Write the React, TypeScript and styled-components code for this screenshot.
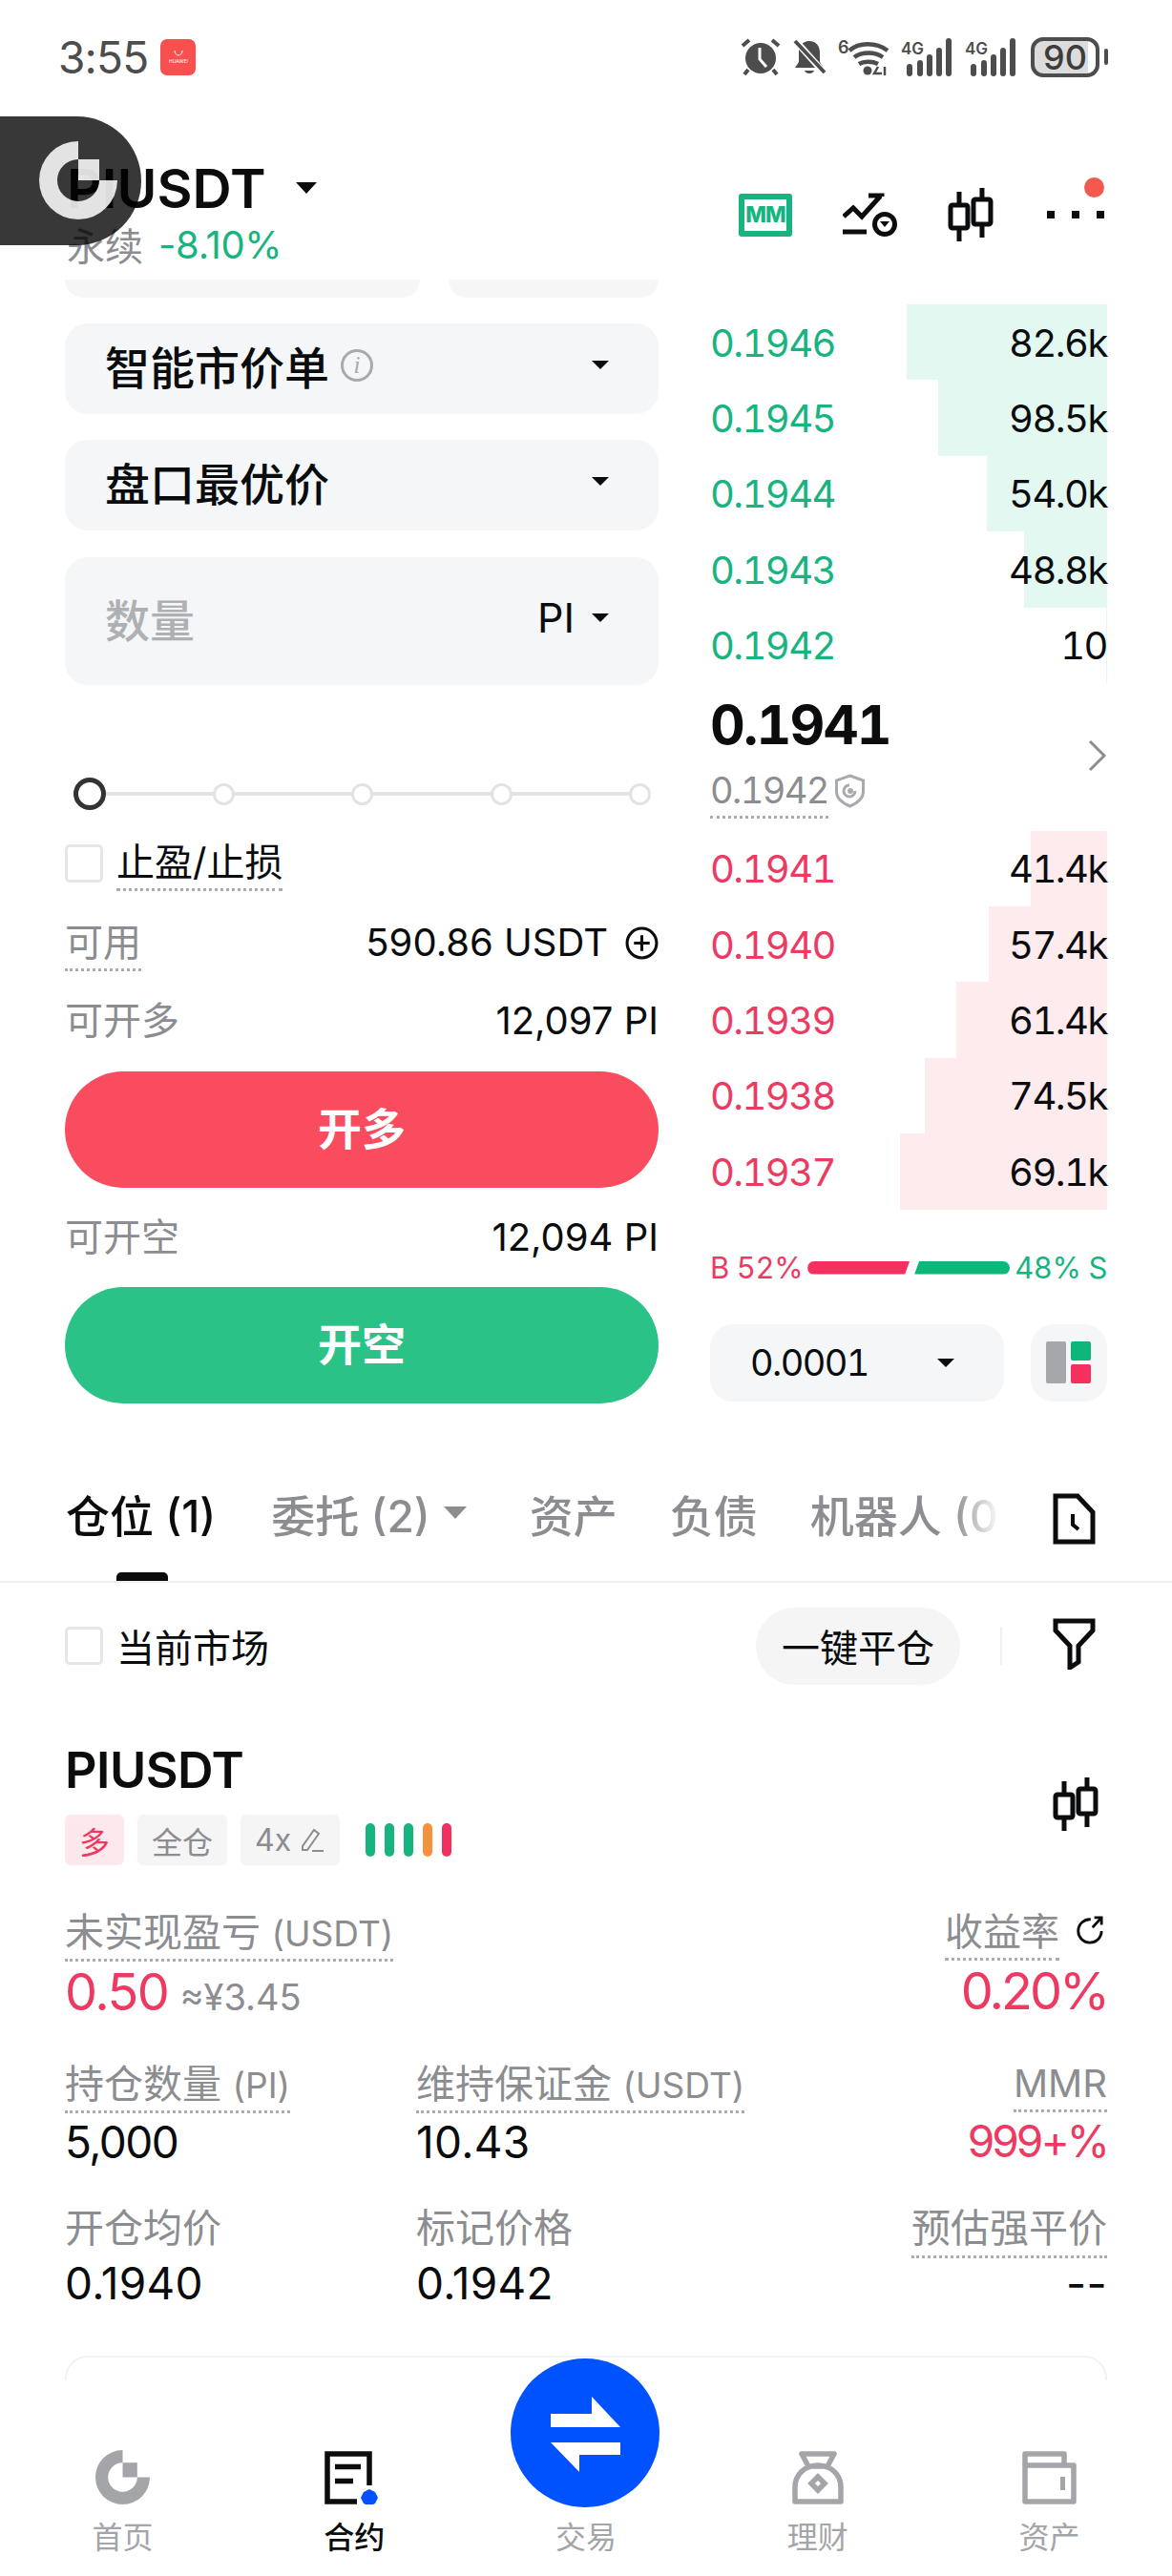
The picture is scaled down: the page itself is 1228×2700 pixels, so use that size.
import styled, { createGlobalStyle } from "styled-components";

const colors = {
  ink: "#0a0c0e",
  gray: "#8b8d90",
  muted: "#a3a5a8",
  field: "#f4f6f7",
  green: "#17b47f",
  red: "#ec3a62",
  greenBar: "#e3f8f1",
  redBar: "#fdebee",
  status: "#4d4d4d",
};

const GlobalStyle = createGlobalStyle`
  html, body { margin: 0; padding: 0; background: #fff; }
  body { font-family: Inter, "Noto Sans CJK SC", sans-serif; color: ${colors.ink}; }
  * { box-sizing: border-box; }
`;

const asks = [
  { price: "0.1946", size: "82.6k", depth: 210 },
  { price: "0.1945", size: "98.5k", depth: 177 },
  { price: "0.1944", size: "54.0k", depth: 126 },
  { price: "0.1943", size: "48.8k", depth: 87 },
  { price: "0.1942", size: "10", depth: 1 },
];

const bids = [
  { price: "0.1941", size: "41.4k", depth: 80 },
  { price: "0.1940", size: "57.4k", depth: 124 },
  { price: "0.1939", size: "61.4k", depth: 158 },
  { price: "0.1938", size: "74.5k", depth: 191 },
  { price: "0.1937", size: "69.1k", depth: 217 },
];

const sliderStops = [0, 1, 2, 3, 4];
const riskBars = ["#17b47f", "#17b47f", "#17b47f", "#f5923e", "#f0305e"];

const Page = styled.div`
  position: relative;
  width: 1228px;
  height: 2700px;
  overflow: hidden;
  background: #fff;
`;

/* status bar */
const StatusBar = styled.div`
  height: 120px;
  padding: 0 68px 0 61px;
  display: flex;
  align-items: center;
  justify-content: space-between;
  color: ${colors.status};
`;

const StatusLeft = styled.div`
  display: flex;
  align-items: center;
  gap: 13px;
`;

const Clock = styled.span`
  font-size: 46px;
  line-height: 56px;
  letter-spacing: -0.8px;
`;

const AppBadge = styled.div`
  width: 37px;
  height: 38px;
  border-radius: 7px;
  background: #f8504f;
  color: #fff;
  font-size: 5px;
  display: flex;
  flex-direction: column;
  align-items: center;
  justify-content: center;
  gap: 2px;
`;

const StatusIcons = styled.div`
  display: flex;
  align-items: center;
  gap: 12px;
`;

const Battery = styled.div`
  position: relative;
  width: 72px;
  height: 42px;
  margin-left: 2px;
  margin-right: 8px;
  border: 4px solid ${colors.status};
  border-radius: 13px;
  background: linear-gradient(90deg, #dcdcdc 88%, #fff 88%);
  font-size: 36px;
  line-height: 34px;
  font-weight: 500;
  text-align: center;
  color: #3c3c3c;

  &::after {
    content: "";
    position: absolute;
    right: -13px;
    top: 8px;
    width: 4px;
    height: 17px;
    border-radius: 2px;
    background: ${colors.status};
  }
`;

/* header */
const Header = styled.div`
  height: 173px;
  padding: 47px 71px 0 70px;
  display: flex;
  justify-content: space-between;
`;

const TitleLine = styled.div`
  display: flex;
  align-items: center;
  gap: 31px;
  height: 60px;
  font-size: 57px;
  font-weight: 600;
`;

const SubLine = styled.div`
  display: flex;
  align-items: center;
  gap: 16px;
  margin-top: 9px;
  height: 40px;
  font-size: 40px;
  color: ${colors.gray};
`;

const Change = styled.span`
  color: ${colors.green};
  letter-spacing: -0.3px;
`;

const HeadTools = styled.div`
  position: relative;
  display: flex;
  align-items: center;
  gap: 53px;
  height: 56px;
  margin-top: 30px;
`;

const MMBadge = styled.div`
  width: 56px;
  height: 45px;
  border: 6px solid ${colors.green};
  border-radius: 3px;
  color: ${colors.green};
  font-size: 23px;
  line-height: 33px;
  font-weight: 800;
  text-align: center;
  letter-spacing: -1px;
`;

const MoreDots = styled.div`
  position: relative;
  display: flex;
  gap: 18px;
  width: 60px;

  i {
    display: block;
    width: 8px;
    height: 8px;
    background: ${colors.ink};
  }

  &::after {
    content: "";
    position: absolute;
    right: 0;
    top: -35px;
    width: 21px;
    height: 21px;
    border-radius: 50%;
    background: #f4594f;
  }
`;

const FloatBall = styled.div`
  position: absolute;
  left: 0;
  top: 122px;
  width: 148px;
  height: 135px;
  border-radius: 0 68px 68px 0;
  background: rgba(0, 0, 0, 0.78);
  padding: 26px 0 0 41px;
`;

/* trade panel */
const Trade = styled.div`
  display: grid;
  grid-template-columns: 622px 416px;
  gap: 54px;
  padding: 0 68px;
`;

const OrderForm = styled.div`
  display: flex;
  flex-direction: column;
`;

const ClippedRow = styled.div`
  display: flex;
  gap: 30px;
  height: 19px;
`;

const ClippedField = styled.div<{ $width: number }>`
  width: ${(p) => p.$width}px;
  background: ${colors.field};
  border-radius: 0 0 24px 24px;
`;

const Field = styled.div<{ $height: number; $top: number }>`
  height: ${(p) => p.$height}px;
  margin-top: ${(p) => p.$top}px;
  padding: 0 52px 8px 42px;
  display: flex;
  align-items: center;
  justify-content: space-between;
  background: ${colors.field};
  border-radius: 24px;
  font-size: 47px;
  font-weight: 500;
`;

const FieldLabel = styled.span`
  display: flex;
  align-items: center;
  gap: 12px;
`;

const Placeholder = styled.span`
  color: #aeb0b3;
`;

const UnitPicker = styled.span`
  display: flex;
  align-items: center;
  gap: 18px;
  font-size: 43px;
  font-weight: 400;
`;

const Caret = styled.span<{ $size?: number; $color?: string }>`
  display: inline-block;
  width: 0;
  height: 0;
  border-left: ${(p) => p.$size ?? 9}px solid transparent;
  border-right: ${(p) => p.$size ?? 9}px solid transparent;
  border-top: ${(p) => Math.round((p.$size ?? 9) * 1.05)}px solid ${(p) => p.$color ?? colors.ink};
`;

const InfoDot = styled.span`
  width: 34px;
  height: 34px;
  border: 3px solid #a8aaad;
  border-radius: 50%;
  color: #a8aaad;
  font-family: "Liberation Serif", serif;
  font-style: italic;
  font-size: 25px;
  line-height: 28px;
  text-align: center;
`;

const Slider = styled.div`
  position: relative;
  height: 32px;
  margin: 98px 8px 0 9px;
  display: flex;
  align-items: center;
  justify-content: space-between;

  &::before {
    content: "";
    position: absolute;
    left: 10px;
    right: 10px;
    top: 14px;
    height: 4px;
    background: #e3e3e3;
  }
`;

const Knob = styled.span<{ $active: boolean }>`
  position: relative;
  flex: none;
  width: ${(p) => (p.$active ? 34 : 23)}px;
  height: ${(p) => (p.$active ? 34 : 23)}px;
  margin-right: ${(p) => (p.$active ? -11 : 0)}px;
  border-radius: 50%;
  background: #fff;
  border: ${(p) => (p.$active ? "5px solid #333" : "3px solid #e3e3e3")};
`;

const StopRow = styled.div`
  display: flex;
  gap: 14px;
  margin-top: 32px;
`;

const Check = styled.span`
  flex: none;
  width: 40px;
  height: 40px;
  margin-top: 5px;
  border: 3px solid #e6e6e6;
  border-radius: 5px;
  background: #fff;
`;

const Dotted = styled.span<{ $size?: number; $tone?: string; $plain?: boolean }>`
  display: inline-block;
  font-size: ${(p) => p.$size ?? 40}px;
  line-height: 1.2;
  padding-bottom: 3px;
  border-bottom: 3px dotted ${(p) => (p.$plain ? "transparent" : "#aaacaf")};
  color: ${(p) => p.$tone ?? colors.gray};
  white-space: nowrap;
`;

const Unit = styled.span`
  font-size: 37px;
`;

const InfoRow = styled.div<{ $top: number }>`
  display: flex;
  align-items: flex-start;
  justify-content: space-between;
  margin-top: ${(p) => p.$top}px;
`;

const RowValue = styled.span`
  display: flex;
  align-items: center;
  gap: 18px;
  font-size: 40px;
  line-height: 48px;
  white-space: nowrap;
`;

const GrayLabel = styled.span`
  font-size: 40px;
  line-height: 48px;
  color: ${colors.gray};
`;

const ActionButton = styled.div<{ $bg: string; $top: number }>`
  height: 122px;
  margin-top: ${(p) => p.$top}px;
  padding-bottom: 9px;
  border-radius: 61px;
  background: ${(p) => p.$bg};
  color: #fff;
  font-size: 46px;
  font-weight: 600;
  display: flex;
  align-items: center;
  justify-content: center;
`;

/* order book */
const Book = styled.div`
  display: flex;
  flex-direction: column;
  font-variant-numeric: tabular-nums;
  letter-spacing: -1.6px;
`;

const BookList = styled.div<{ $top: number }>`
  margin-top: ${(p) => p.$top}px;
`;

const BookRow = styled.div`
  position: relative;
  height: 79.4px;
  padding-top: 1px;
  display: flex;
  align-items: center;
  justify-content: space-between;
  font-size: 40px;
`;

const DepthBar = styled.span<{ $side: "ask" | "bid" }>`
  position: absolute;
  right: 0;
  top: 0;
  bottom: 0;
  background: ${(p) => (p.$side === "ask" ? colors.greenBar : colors.redBar)};
`;

const Price = styled.span<{ $side: "ask" | "bid" }>`
  position: relative;
  color: ${(p) => (p.$side === "ask" ? colors.green : colors.red)};
`;

const Size = styled.span`
  position: relative;
  letter-spacing: -1.5px;
`;

const LastBlock = styled.div`
  display: flex;
  align-items: center;
  justify-content: space-between;
  margin-top: 11px;
`;

const LastPrice = styled.div`
  font-size: 57px;
  line-height: 66px;
  font-weight: 700;
  letter-spacing: -1.8px;
`;

const MarkRow = styled.div`
  display: flex;
  align-items: flex-start;
  gap: 6px;
  margin-top: 13px;

  svg {
    margin-top: 5px;
  }
`;

const Ratio = styled.div`
  display: flex;
  align-items: center;
  justify-content: space-between;
  height: 40px;
  margin-top: 41px;
  font-size: 31px;
  letter-spacing: -0.4px;
`;

const RatioText = styled.span<{ $tone: string }>`
  color: ${(p) => p.$tone};
  white-space: nowrap;
`;

const RatioBars = styled.div`
  display: flex;
  gap: 5px;
`;

const RatioBar = styled.span<{ $tone: string; $width: number; $left: boolean }>`
  display: block;
  width: ${(p) => p.$width}px;
  height: 14px;
  background: ${(p) => p.$tone};
  border-radius: ${(p) => (p.$left ? "7px 0 0 7px" : "0 7px 7px 0")};
  clip-path: ${(p) =>
    p.$left
      ? "polygon(0 0, 100% 0, calc(100% - 5px) 100%, 0 100%)"
      : "polygon(5px 0, 100% 0, 100% 100%, 0 100%)"};
`;

const Controls = styled.div`
  display: flex;
  gap: 28px;
  margin-top: 39px;
`;

const StepPicker = styled.div`
  width: 308px;
  height: 81px;
  padding: 0 52px 0 42px;
  display: flex;
  align-items: center;
  justify-content: space-between;
  background: ${colors.field};
  border-radius: 24px;
  font-size: 38px;
`;

const LayoutButton = styled.div`
  width: 80px;
  height: 81px;
  display: flex;
  align-items: center;
  justify-content: center;
  background: ${colors.field};
  border-radius: 24px;
`;

/* tabs */
const TabBar = styled.div`
  height: 132px;
  margin-top: 56px;
  padding: 0 80px 0 69px;
  display: flex;
  align-items: center;
  justify-content: space-between;
  border-bottom: 2px solid #f0f0f0;
`;

const TabScroller = styled.div`
  align-self: stretch;
  width: 979px;
  display: flex;
  gap: 55px;
  overflow: hidden;
  white-space: nowrap;
  -webkit-mask-image: linear-gradient(90deg, #000 95%, transparent 100%);
  mask-image: linear-gradient(90deg, #000 95%, transparent 100%);
`;

const Tab = styled.div<{ $active?: boolean; $left?: number; $extra?: number }>`
  position: relative;
  flex: none;
  display: flex;
  align-items: center;
  gap: 14px;
  margin-left: ${(p) => p.$left ?? 0}px;
  margin-right: ${(p) => p.$extra ?? 0}px;
  padding-bottom: 13px;
  font-size: 46px;
  font-weight: 500;
  color: ${(p) => (p.$active ? colors.ink : colors.gray)};
`;

const Indicator = styled.span`
  position: absolute;
  left: 53px;
  bottom: 0;
  width: 54px;
  height: 9px;
  border-radius: 5px 5px 0 0;
  background: ${colors.ink};
`;

const FilterRow = styled.div`
  height: 132px;
  padding: 0 80px 0 68px;
  display: flex;
  align-items: center;
  justify-content: space-between;
`;

const FilterLeft = styled.div`
  display: flex;
  align-items: center;
  gap: 14px;
  font-size: 40px;

  ${Check} {
    margin-top: 0;
  }
`;

const FilterRight = styled.div`
  display: flex;
  align-items: center;

  svg {
    margin-bottom: 4px;
  }
`;

const PillButton = styled.div`
  width: 214px;
  height: 81px;
  border-radius: 41px;
  background: #f5f5f5;
  font-size: 40px;
  display: flex;
  align-items: center;
  justify-content: center;
`;

const VRule = styled.span`
  width: 2px;
  height: 40px;
  margin: 0 53px 0 42px;
  background: #f0f0f0;
`;

/* position card */
const PositionCard = styled.div`
  padding: 35px 68px 0;
`;

const CardHead = styled.div`
  display: flex;
  align-items: center;
  justify-content: space-between;
  padding-right: 6px;
`;

const Symbol = styled.div`
  height: 60px;
  font-size: 52px;
  line-height: 60px;
  font-weight: 600;
  letter-spacing: -0.5px;
`;

const TagRow = styled.div`
  display: flex;
  align-items: center;
  gap: 14px;
  margin-top: 16px;
`;

const Tag = styled.span<{ $tone?: string; $bg?: string }>`
  display: flex;
  align-items: center;
  gap: 8px;
  height: 53px;
  padding: 0 15px;
  border-radius: 6px;
  background: ${(p) => p.$bg ?? "#f5f5f5"};
  color: ${(p) => p.$tone ?? colors.gray};
  font-size: 32px;
`;

const RiskBars = styled.div`
  display: flex;
  gap: 10px;
  margin-left: 13px;
`;

const RiskBar = styled.span`
  width: 10px;
  height: 35px;
  border-radius: 5px;
`;

const Metrics = styled.div<{ $top: number }>`
  display: grid;
  grid-template-columns: 368px 1fr auto;
  margin-top: ${(p) => p.$top}px;
`;

const Metric = styled.div<{ $right?: boolean }>`
  display: flex;
  flex-direction: column;
  align-items: ${(p) => (p.$right ? "flex-end" : "flex-start")};
`;

const MetricValue = styled.div<{ $size?: number; $tone?: string; $gap?: number; $spacing?: number }>`
  display: flex;
  align-items: baseline;
  gap: 12px;
  margin-top: ${(p) => p.$gap ?? 2}px;
  font-size: ${(p) => p.$size ?? 46}px;
  line-height: ${(p) => (p.$size ?? 46) + 10}px;
  color: ${(p) => p.$tone ?? colors.ink};
  letter-spacing: ${(p) => p.$spacing ?? 0.3}px;
`;

const Fiat = styled.span`
  font-size: 38px;
  letter-spacing: 0;
  color: ${colors.gray};
`;

const LabelWithIcon = styled.div`
  display: flex;
  align-items: flex-start;
  gap: 16px;
  padding-right: 4px;
`;

const NextCard = styled.div`
  height: 120px;
  margin-top: 48px;
  border: 2px solid #f2f2f2;
  border-radius: 24px 24px 0 0;
`;

/* bottom nav */
const BottomNav = styled.div`
  position: absolute;
  left: 0;
  right: 0;
  bottom: 0;
  height: 205px;
  padding: 73px 7px 0;
  display: grid;
  grid-template-columns: repeat(5, 1fr);
  background: #fff;
`;

const NavItem = styled.div<{ $active?: boolean }>`
  display: flex;
  flex-direction: column;
  align-items: center;
  gap: 15px;
  font-size: 32px;
  line-height: 40px;
  font-weight: ${(p) => (p.$active ? 500 : 400)};
  color: ${(p) => (p.$active ? colors.ink : colors.muted)};
`;

const NavIcon = styled.div`
  height: 57px;
`;

const TradeFab = styled.div`
  position: absolute;
  left: 535px;
  top: -23px;
  width: 156px;
  height: 156px;
  border-radius: 50%;
  background: #0052ff;
`;

const Candles = ({ size = 56 }: { size?: number }) => (
  <svg width={size * 0.91} height={size} viewBox="0 0 51 56" fill="none" stroke={colors.ink} strokeWidth="5">
    <path d="M12 4v14M12 42v14M36 0v12M36 38v14" />
    <rect x="3" y="18" width="18" height="24" rx="2" />
    <rect x="27" y="12" width="18" height="26" rx="2" />
  </svg>
);

const Logo = ({ size, color }: { size: number; color: string }) => (
  <svg width={size} height={size} viewBox="0 0 82 82" fill={color}>
    <path d="M41 0A41 41 0 1 0 82 41H63A22 22 0 1 1 41 19Z" />
    <rect x="41" y="19" width="22" height="22" />
  </svg>
);

const Signal = () => (
  <svg width="55" height="40" viewBox="0 0 55 40" fill={colors.status}>
    <text x="0" y="17" fontSize="17" fontWeight="600" fontFamily="Inter, sans-serif">4G</text>
    <rect x="6" y="27" width="6" height="13" rx="3" />
    <rect x="17" y="23" width="6" height="17" rx="3" />
    <rect x="27" y="17" width="6" height="23" rx="3" />
    <rect x="37" y="10" width="6" height="30" rx="3" />
    <rect x="47" y="0" width="6" height="40" rx="3" />
  </svg>
);

export default function App() {
  return (
    <Page>
      <GlobalStyle />
      <StatusBar>
        <StatusLeft>
          <Clock>3:55</Clock>
          <AppBadge>
            <svg width="10" height="6" viewBox="0 0 10 6" fill="none" stroke="#fff" strokeWidth="1">
              <path d="M1 0c0 3 2 5 4 5s4-2 4-5" />
            </svg>
            HUAWEI
          </AppBadge>
        </StatusLeft>
        <StatusIcons>
          <svg width="42" height="40" viewBox="0 0 42 40" fill={colors.status}>
            <circle cx="21" cy="21" r="16" />
            <path d="M2 8l7-6M40 8l-7-6M8 33l-4 5M34 33l4 5" stroke={colors.status} strokeWidth="4" />
            <path d="M20 10v12l7 8" stroke="#fff" strokeWidth="3" fill="none" />
          </svg>
          <svg width="36" height="40" viewBox="0 0 36 40" fill={colors.status}>
            <path d="M18 3c7 0 11 5 11 12v10l4 6H3l4-6V15C7 8 11 3 18 3z" />
            <path d="M13 34c1 4 9 4 10 0z" />
            <path d="M2 1l32 36" stroke="#fff" strokeWidth="7" />
            <path d="M3 3l31 33" stroke={colors.status} strokeWidth="4" />
          </svg>
          <svg width="54" height="40" viewBox="0 0 54 40" fill="none" stroke={colors.status} strokeWidth="4.5">
            <text x="0" y="16" fontSize="18" fontWeight="600" fontFamily="Inter, sans-serif" fill={colors.status} stroke="none">6</text>
            <path d="M12 13c10-9 28-9 40 0M17 20c8-6 22-6 30 0M22 27c5-3 14-3 20 0" />
            <circle cx="31" cy="34" r="4.5" fill={colors.status} stroke="none" />
            <path d="M42 30l-4 7h8M49 30v9" strokeWidth="2.5" />
          </svg>
          <Signal />
          <Signal />
          <Battery>90</Battery>
        </StatusIcons>
      </StatusBar>

      <Header>
        <div>
          <TitleLine>
            PIUSDT
            <Caret $size={11} />
          </TitleLine>
          <SubLine>
            永续
            <Change>-8.10%</Change>
          </SubLine>
        </div>
        <HeadTools>
          <MMBadge>MM</MMBadge>
          <svg width="57" height="46" viewBox="0 0 57 46" fill="none" stroke={colors.ink} strokeWidth="5">
            <path d="M1 25l10-9 9 9 19-21M27 3h14v1" />
            <path d="M0 41h25" />
            <circle cx="44" cy="33" r="10.5" />
            <path d="M39 30h10l-5 6z" fill={colors.ink} stroke="none" />
          </svg>
          <Candles />
          <MoreDots>
            <i />
            <i />
            <i />
          </MoreDots>
        </HeadTools>
      </Header>

      <FloatBall>
        <Logo size={82} color="rgba(255,255,255,0.86)" />
      </FloatBall>

      <Trade>
        <OrderForm>
          <ClippedRow>
            <ClippedField $width={372} />
            <ClippedField $width={220} />
          </ClippedRow>
          <Field $height={95} $top={27}>
            <FieldLabel>
              智能市价单
              <InfoDot>i</InfoDot>
            </FieldLabel>
            <Caret />
          </Field>
          <Field $height={95} $top={27}>
            盘口最优价
            <Caret />
          </Field>
          <Field $height={134} $top={28}>
            <Placeholder>数量</Placeholder>
            <UnitPicker>
              PI
              <Caret />
            </UnitPicker>
          </Field>
          <Slider>
            {sliderStops.map((stop) => (
              <Knob key={stop} $active={stop === 0} />
            ))}
          </Slider>
          <StopRow>
            <Check />
            <Dotted $tone={colors.ink}>止盈/止损</Dotted>
          </StopRow>
          <InfoRow $top={30}>
            <Dotted>可用</Dotted>
            <RowValue>
              590.86 USDT
              <svg width="35" height="35" viewBox="0 0 34 34" fill="none" stroke={colors.ink} strokeWidth="3">
                <circle cx="17" cy="17" r="15" />
                <path d="M17 9v16M9 17h16" />
              </svg>
            </RowValue>
          </InfoRow>
          <InfoRow $top={28}>
            <GrayLabel>可开多</GrayLabel>
            <RowValue>12,097 PI</RowValue>
          </InfoRow>
          <ActionButton $bg="#f94d5f" $top={29}>开多</ActionButton>
          <InfoRow $top={28}>
            <GrayLabel>可开空</GrayLabel>
            <RowValue>12,094 PI</RowValue>
          </InfoRow>
          <ActionButton $bg="#2bc287" $top={28}>开空</ActionButton>
        </OrderForm>

        <Book>
          <BookList $top={26}>
            {asks.map((row) => (
              <BookRow key={row.price}>
                <DepthBar $side="ask" style={{ width: row.depth }} />
                <Price $side="ask">{row.price}</Price>
                <Size>{row.size}</Size>
              </BookRow>
            ))}
          </BookList>
          <LastBlock>
            <div>
              <LastPrice>0.1941</LastPrice>
              <MarkRow>
                <Dotted $size={38}>0.1942</Dotted>
                <svg width="33" height="36" viewBox="0 0 33 36" fill="none" stroke="#a8aaad" strokeWidth="3">
                  <path d="M16.5 2l14 5v12c0 7-7 12-14 15C9.5 31 2.5 26 2.5 19V7z" />
                  <path d="M22 18a6 6 0 1 1-6-6" />
                  <circle cx="17" cy="18" r="1.5" />
                </svg>
              </MarkRow>
            </div>
            <svg width="20" height="34" viewBox="0 0 20 34" fill="none" stroke={colors.gray} strokeWidth="3">
              <path d="M2 2l15 15L2 32" />
            </svg>
          </LastBlock>
          <BookList $top={13}>
            {bids.map((row) => (
              <BookRow key={row.price}>
                <DepthBar $side="bid" style={{ width: row.depth }} />
                <Price $side="bid">{row.price}</Price>
                <Size>{row.size}</Size>
              </BookRow>
            ))}
          </BookList>
          <Ratio>
            <RatioText $tone={colors.red}>B 52%</RatioText>
            <RatioBars>
              <RatioBar $tone="#f4305e" $width={107} $left />
              <RatioBar $tone="#0fb67a" $width={100} $left={false} />
            </RatioBars>
            <RatioText $tone={colors.green}>48% S</RatioText>
          </Ratio>
          <Controls>
            <StepPicker>
              0.0001
              <Caret />
            </StepPicker>
            <LayoutButton>
              <svg width="48" height="44" viewBox="0 0 48 44">
                <rect x="0" y="0" width="21" height="44" rx="2" fill="#a5a7aa" />
                <rect x="26" y="0" width="21" height="20" rx="2" fill="#0fb67a" />
                <rect x="26" y="24" width="21" height="20" rx="2" fill="#f4305e" />
              </svg>
            </LayoutButton>
          </Controls>
        </Book>
      </Trade>

      <TabBar>
        <TabScroller>
          <Tab $active>
            仓位 (1)
            <Indicator />
          </Tab>
          <Tab $left={3} $extra={11}>
            委托 (2)
            <Caret $size={12} $color={colors.gray} />
          </Tab>
          <Tab>资产</Tab>
          <Tab>负债</Tab>
          <Tab>机器人 (0)</Tab>
        </TabScroller>
        <svg width="45" height="54" viewBox="0 0 45 54" fill="none" stroke={colors.ink} strokeWidth="5">
          <path d="M3 3h23l16 17v31H3z" />
          <path d="M21 22v11l6 5" strokeWidth="4" />
        </svg>
      </TabBar>

      <FilterRow>
        <FilterLeft>
          <Check />
          当前市场
        </FilterLeft>
        <FilterRight>
          <PillButton>一键平仓</PillButton>
          <VRule />
          <svg width="45" height="54" viewBox="0 0 45 54" fill="none" stroke={colors.ink} strokeWidth="5">
            <path d="M3 3h39v10L27 29v17l-9 6V29L3 13z" />
          </svg>
        </FilterRight>
      </FilterRow>

      <PositionCard>
        <CardHead>
          <div>
            <Symbol>PIUSDT</Symbol>
            <TagRow>
              <Tag $bg="#fde9ed" $tone={colors.red}>多</Tag>
              <Tag>全仓</Tag>
              <Tag>
                4x
                <svg width="28" height="28" viewBox="0 0 28 28" fill="none" stroke={colors.gray} strokeWidth="2">
                  <path d="M4 20L16 3l5 4L9 24H4zM14 25h12" />
                </svg>
              </Tag>
              <RiskBars>
                {riskBars.map((tone, i) => (
                  <RiskBar key={i} style={{ background: tone }} />
                ))}
              </RiskBars>
            </TagRow>
          </div>
          <Candles />
        </CardHead>

        <Metrics $top={46}>
          <Metric>
            <Dotted $size={41}>未实现盈亏 <Unit>(USDT)</Unit></Dotted>
            <MetricValue $size={54} $tone={colors.red} $gap={0} $spacing={-1.5}>
              0.50
              <Fiat>≈¥3.45</Fiat>
            </MetricValue>
          </Metric>
          <span />
          <Metric $right>
            <LabelWithIcon>
              <Dotted>收益率</Dotted>
              <svg width="30" height="46" viewBox="0 0 32 46" fill="none" stroke={colors.ink} strokeWidth="3">
                <path d="M18 10a13 13 0 1 0 12 13M20 19l9-10M22 8h8v8" />
              </svg>
            </LabelWithIcon>
            <MetricValue $size={54} $tone={colors.red} $gap={0} $spacing={-3}>0.20%</MetricValue>
          </Metric>
        </Metrics>

        <Metrics $top={35}>
          <Metric>
            <Dotted $size={41}>持仓数量 <Unit>(PI)</Unit></Dotted>
            <MetricValue $spacing={-1.5}>5,000</MetricValue>
          </Metric>
          <Metric>
            <Dotted $size={41}>维持保证金 <Unit>(USDT)</Unit></Dotted>
            <MetricValue>10.43</MetricValue>
          </Metric>
          <Metric $right>
            <Dotted>MMR</Dotted>
            <MetricValue $tone={colors.red} $spacing={-3}>999+%</MetricValue>
          </Metric>
        </Metrics>

        <Metrics $top={38}>
          <Metric>
            <Dotted $size={41} $plain>开仓均价</Dotted>
            <MetricValue $gap={-2}>0.1940</MetricValue>
          </Metric>
          <Metric>
            <Dotted $size={41} $plain>标记价格</Dotted>
            <MetricValue $gap={-2}>0.1942</MetricValue>
          </Metric>
          <Metric $right>
            <Dotted $size={41}>预估强平价</Dotted>
            <MetricValue $gap={-2}>--</MetricValue>
          </Metric>
        </Metrics>

        <NextCard />
      </PositionCard>

      <BottomNav>
        <NavItem>
          <NavIcon>
            <Logo size={57} color={colors.muted} />
          </NavIcon>
          首页
        </NavItem>
        <NavItem $active>
          <NavIcon>
            <svg width="62" height="57" viewBox="0 0 62 57" fill="none" stroke={colors.ink} strokeWidth="5.5">
              <path d="M47 37V4H3v50h31" />
              <path d="M11 17.5h27M11 32.5h19" />
              <path d="M47 41l6 3 3 6-3 6-6 3-6-3-3-6 3-6z" fill="#0052ff" stroke="none" />
            </svg>
          </NavIcon>
          合约
        </NavItem>
        <NavItem>
          <NavIcon />
          交易
        </NavItem>
        <NavItem>
          <NavIcon>
            <svg width="54" height="57" viewBox="0 0 54 57" fill="none" stroke={colors.muted} strokeWidth="5.5">
              <path d="M10 4h34l-7 13H17zM3 54V39C3 25 14 16 27 16s24 9 24 23v15z" strokeLinejoin="round" />
              <path d="M27 28l7 7-7 7-7-7z" />
            </svg>
          </NavIcon>
          理财
        </NavItem>
        <NavItem>
          <NavIcon>
            <svg width="57" height="57" viewBox="0 0 57 57" fill="none" stroke={colors.muted} strokeWidth="5.5">
              <path d="M3 16V4h41v12" strokeLinejoin="round" />
              <rect x="3" y="16" width="51" height="38" strokeLinejoin="round" />
              <path d="M40 28h5v14h-5z" fill={colors.muted} stroke="none" />
            </svg>
          </NavIcon>
          资产
        </NavItem>
        <TradeFab>
          <svg width="156" height="156" viewBox="0 0 156 156" fill="#fff">
            <path d="M42 58h43V40l30 32H42z" />
            <path d="M42 88h73v13H72v18z" />
          </svg>
        </TradeFab>
      </BottomNav>
    </Page>
  );
}
